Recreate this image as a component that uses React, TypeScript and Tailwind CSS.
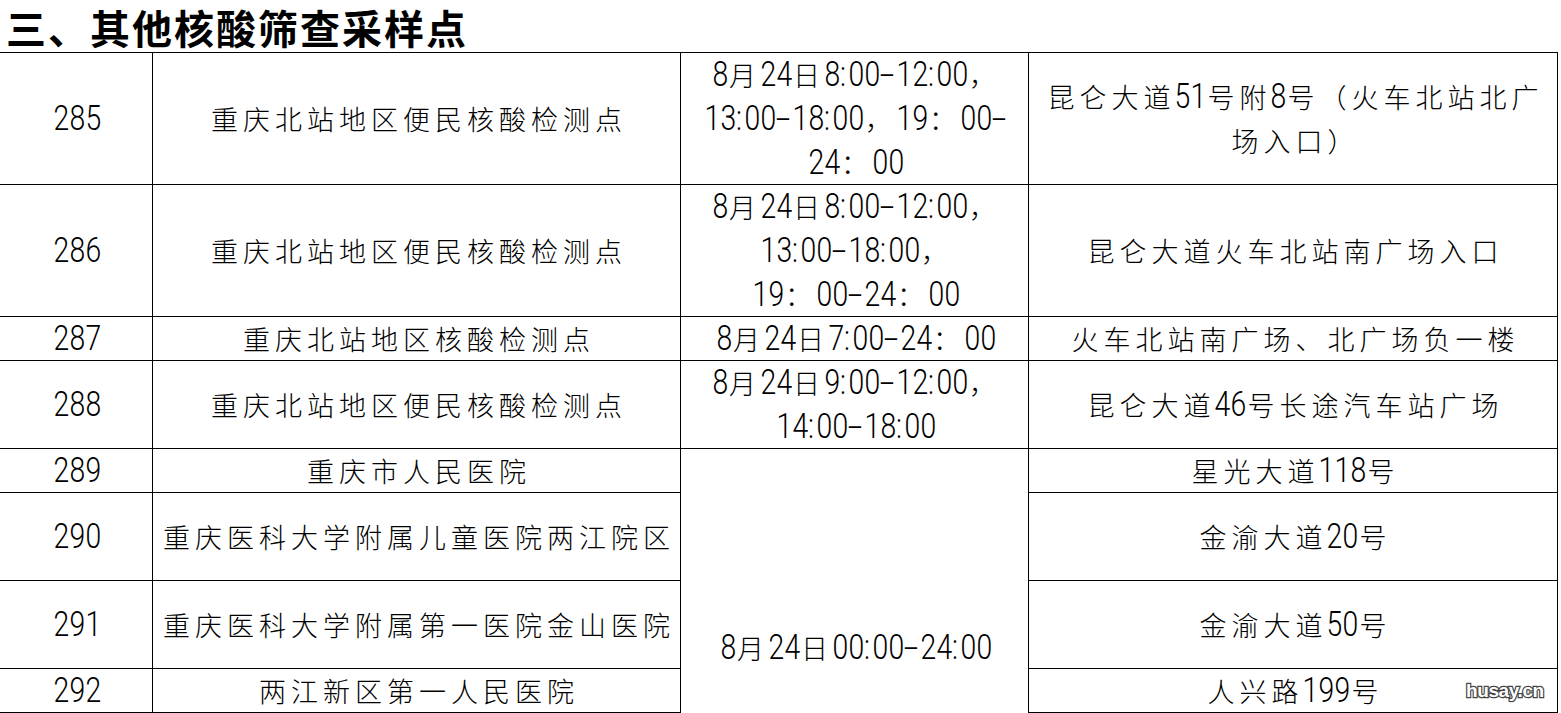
type Row = {
  no: string;
  name: string;
  time?: string[];
  addr: string[];
};

const rows: Row[] = [
  {
    no: "285",
    name: "重庆北站地区便民核酸检测点",
    time: ["8月24日8:00-12:00，", "13:00-18:00，19：00-", "24：00"],
    addr: ["昆仑大道51号附8号（火车北站北广", "场入口）"],
  },
  {
    no: "286",
    name: "重庆北站地区便民核酸检测点",
    time: ["8月24日8:00-12:00，", "13:00-18:00，", "19：00-24：00"],
    addr: ["昆仑大道火车北站南广场入口"],
  },
  {
    no: "287",
    name: "重庆北站地区核酸检测点",
    time: ["8月24日7:00-24：00"],
    addr: ["火车北站南广场、北广场负一楼"],
  },
  {
    no: "288",
    name: "重庆北站地区便民核酸检测点",
    time: ["8月24日9:00-12:00，", "14:00-18:00"],
    addr: ["昆仑大道46号长途汽车站广场"],
  },
  { no: "289", name: "重庆市人民医院", addr: ["星光大道118号"] },
  { no: "290", name: "重庆医科大学附属儿童医院两江院区", addr: ["金渝大道20号"] },
  { no: "291", name: "重庆医科大学附属第一医院金山医院", addr: ["金渝大道50号"] },
  { no: "292", name: "两江新区第一人民医院", addr: ["人兴路199号"] },
];

const latin = "font-['Roboto','Inter','Liberation_Sans',sans-serif] font-light text-[35px] leading-none";

// each glyph gets a fixed box so the narrow digits of the original line up
function Glyph({ c }: { c: string }) {
  if (/[0-9]/.test(c))
    return <span className={`w-[16px] scale-x-[0.81] text-center ${latin}`}>{c}</span>;
  if (c === ":" || c === ".")
    return <span className={`w-[8px] scale-x-[0.81] text-center ${latin}`}>{c}</span>;
  if (c === "-")
    return <span className={`w-[16px] scale-x-[1.5] text-center ${latin}`}>{c}</span>;
  return (
    <span className="w-[32px] text-center font-['Noto_Sans_CJK_SC_Light','Noto_Sans_CJK_SC',sans-serif] text-[27px] font-light leading-none">
      {c}
    </span>
  );
}

function Line({ text }: { text: string }) {
  return (
    <div className="flex h-[44px] shrink-0 items-center whitespace-nowrap">
      {Array.from(text).map((c, i) => (
        <Glyph key={i} c={c} />
      ))}
    </div>
  );
}

function Cell({ lines }: { lines: string[] }) {
  return (
    <div className="flex flex-col items-center justify-center border-b border-r border-black">
      {lines.map((l) => (
        <Line key={l} text={l} />
      ))}
    </div>
  );
}

export default function App() {
  return (
    <div className="relative h-[713px] w-[1561px] overflow-hidden bg-white font-['Noto_Sans_CJK_SC',sans-serif] text-black">
      <h1 className="flex h-[52px] items-center pl-[6px] pt-[2px] text-[40px] font-bold leading-none tracking-[2px]">
        三、其他核酸筛查采样点
      </h1>
      <div className="grid w-[1558px] grid-cols-[153px_528px_348px_529px] grid-rows-[132px_132px_44px_88px_44px_88px_88px_44px] border-t border-black">
        {rows.map((r, i) => (
          <div key={r.no} className="contents">
            <Cell lines={[r.no]} />
            <Cell lines={[r.name]} />
            {r.time && <Cell lines={r.time} />}
            {i === 4 && (
              <div className="row-span-4 flex flex-col items-center border-r border-black pt-[176px]">
                <Line text="8月24日00:00-24:00" />
              </div>
            )}
            <Cell lines={r.addr} />
          </div>
        ))}
      </div>
      <span className="absolute left-[1466px] top-[679px] font-['Liberation_Sans',sans-serif] text-[19px] font-bold leading-[24px] tracking-[-0.4px] text-white [-webkit-text-stroke:2.5px_#444] [paint-order:stroke_fill]">
        husay.cn
      </span>
    </div>
  );
}
